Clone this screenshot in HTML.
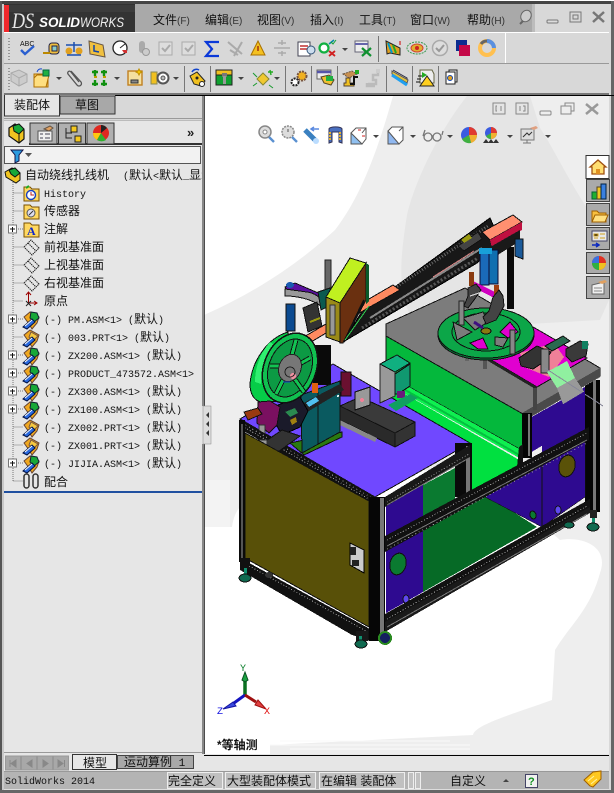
<!DOCTYPE html>
<html><head><meta charset="utf-8"><style>
html,body{margin:0;padding:0;background:#fff;width:614px;height:793px;overflow:hidden}
svg{display:block}
.c{font-family:"Liberation Sans","WenQuanYi Zen Hei","Noto Sans CJK SC",sans-serif;font-size:12px;fill:#111}
.m{font-family:"Liberation Mono","WenQuanYi Zen Hei","Noto Sans CJK SC",monospace;font-size:10px;fill:#111}
.t{font-family:"Liberation Sans","WenQuanYi Zen Hei","Noto Sans CJK SC",sans-serif;font-size:12px;fill:#111}
.s{font-family:"Liberation Sans",sans-serif;font-size:10px;fill:#333}
.dd{fill:#444}
.dot{stroke:#777;stroke-dasharray:1 1;stroke-width:1;fill:none}
</style></head><body>
<svg width="614" height="793" viewBox="0 0 614 793" xmlns="http://www.w3.org/2000/svg">
<rect width="614" height="793" fill="#d8d8d8"/>
<rect width="614" height="1" y="0" fill="#fff"/>
<rect x="0" y="1" width="614" height="3" fill="#444"/>
<rect x="0" y="1" width="2" height="792" fill="#555"/>
<rect x="611" y="1" width="3" height="792" fill="#666"/>
<rect x="0" y="790" width="614" height="3" fill="#666"/>
<rect x="2" y="4" width="2" height="786" fill="#c8c8c8"/>
<rect x="609" y="4" width="2" height="786" fill="#d8d8d8"/>

<!-- title bar -->
<rect x="4" y="4" width="605" height="28" fill="#d8d8d8"/>
<rect x="135" y="4" width="397" height="28" fill="#a9a9a9"/>
<rect x="532" y="4" width="3" height="28" fill="#bcbcbc"/>
<rect x="4" y="4" width="131" height="28" fill="#333"/>
<rect x="9" y="5" width="126" height="7" fill="#3c3c3c"/>
<rect x="4" y="5" width="5" height="27" fill="#f0282c"/>
<text x="12" y="28" font-family="Liberation Serif,serif" font-style="italic" font-size="22" fill="#e8e8e8" textLength="22" lengthAdjust="spacingAndGlyphs">DS</text>
<text x="39" y="27" font-family="Liberation Sans,sans-serif" font-style="italic" font-weight="bold" font-size="14" fill="#fff" textLength="41" lengthAdjust="spacingAndGlyphs">SOLID</text>
<text x="80" y="27" font-family="Liberation Sans,sans-serif" font-style="italic" font-size="14" fill="#eee" textLength="44" lengthAdjust="spacingAndGlyphs">WORKS</text>
<g>
<text x="153" y="24" class="c">文件<tspan class="s">(F)</tspan></text>
<text x="205" y="24" class="c">编辑<tspan class="s">(E)</tspan></text>
<text x="257" y="24" class="c">视图<tspan class="s">(V)</tspan></text>
<text x="310" y="24" class="c">插入<tspan class="s">(I)</tspan></text>
<text x="359" y="24" class="c">工具<tspan class="s">(T)</tspan></text>
<text x="410" y="24" class="c">窗口<tspan class="s">(W)</tspan></text>
<text x="467" y="24" class="c">帮助<tspan class="s">(H)</tspan></text>
</g>
<g><ellipse cx="526" cy="16" rx="5" ry="6" fill="#ccc" stroke="#666" transform="rotate(30 526 16)"/><path d="M523 21l-3 3" stroke="#666" stroke-width="2"/></g>
<rect x="547" y="20" width="11" height="3" rx="1" fill="#ddd" stroke="#777"/>
<rect x="570" y="12" width="11" height="10" fill="none" stroke="#777"/><rect x="573" y="15" width="5" height="4" fill="none" stroke="#777"/>
<path d="M593 12l11 10M604 12l-11 10" stroke="#777" stroke-width="2.500" fill="none"/>

<!-- toolbars -->
<rect x="4" y="32" width="605" height="1" fill="#fff"/>
<rect x="4" y="63" width="605" height="1" fill="#999"/>
<rect x="505" y="33" width="1" height="30" fill="#fff"/>
<path d="M9 38v22" stroke="#555" stroke-dasharray="1 2"/>
<path d="M9 68v22" stroke="#555" stroke-dasharray="1 2"/>
<!-- row 1 -->
<text x="20" y="46" font-family="Liberation Sans,sans-serif" font-size="7" fill="#111">ABC</text>
<path d="M21 50l4 4 9-8" stroke="#2a5fd0" stroke-width="2.400" fill="none"/>
<rect x="49" y="43" width="10" height="11" rx="3" fill="#f0c040" stroke="#224"/><rect x="52" y="46" width="5" height="5" fill="#8cc" stroke="#224"/><path d="M43 53h7" stroke="#b80" stroke-width="2"/>
<path d="M74 42v10M66 45h16" stroke="#1a4fb0" stroke-width="1.500"/><circle cx="69" cy="51" r="3.500" fill="#e0a020"/><circle cx="79" cy="51" r="3.500" fill="#e0a020"/><path d="M67 55h14" stroke="#1a4fb0" stroke-width="1.500"/>
<path d="M89 41l14 4 2 12-15-3z" fill="#f0c040" stroke="#654"/><path d="M94 45v6l5 1" stroke="#14a" stroke-width="1.500" fill="none"/>
<circle cx="120" cy="48" r="7" fill="#fff" stroke="#222" stroke-width="1.300"/><path d="M120 48l5-4" stroke="#222"/><path d="M122 50h5v3h-3z" fill="#d03030"/>
<rect x="139" y="41" width="6" height="12" rx="3" fill="#aaa"/><circle cx="146" cy="52" r="3.500" fill="#ccc" stroke="#999"/>
<rect x="159" y="42" width="13" height="13" fill="#ddd" stroke="#aaa"/><path d="M162 48l3 3 5-6" stroke="#aaa" stroke-width="2" fill="none"/>
<rect x="182" y="42" width="13" height="13" fill="#ddd" stroke="#aaa"/><path d="M185 48l3 3 5-6" stroke="#aaa" stroke-width="2" fill="none"/>
<path d="M219 42h-13l6 7-6 7h13" stroke="#0a38d8" stroke-width="2.200" fill="none"/>
<path d="M228 42l14 12M242 42l-8 14M230 50l8 5" stroke="#aaa" stroke-width="2" fill="none"/>
<path d="M258 41l7 14h-14z" fill="#f4c020" stroke="#a87000"/><path d="M258 46v5" stroke="#a03010" stroke-width="1.500"/>
<path d="M274 48h16M278 43h8M278 53h8M282 40v5M282 51v5" stroke="#aaa" stroke-width="1.500"/>
<rect x="298" y="42" width="12" height="14" fill="#fff" stroke="#445"/><path d="M300 46h8M300 49h8" stroke="#c03030" stroke-width="1.500"/><circle cx="311" cy="50" r="4" fill="#cde" stroke="#357"/>
<circle cx="324" cy="48" r="4.500" fill="#fff" stroke="#10b040" stroke-width="2.200"/><path d="M329 44l5-4" stroke="#08a" stroke-width="1.500"/><path d="M329 51l6 5M335 51l-6 5" stroke="#d02020" stroke-width="1.800"/><path d="M331 42l2 2 3-4" stroke="#10a030" fill="none"/>
<path class="dd" d="M342 48h6l-3 3z"/>
<rect x="355" y="41" width="13" height="11" fill="#eee" stroke="#667"/><path d="M355 44h13" stroke="#66a" stroke-width="2"/><path d="M362 48l9 8M371 48l-9 8" stroke="#109030" stroke-width="2.200"/>
<rect x="378" y="36" width="1" height="26" fill="#777"/>
<path d="M386 41l14 7v7l-10-2-3 1z" fill="#e0a020" stroke="#222"/><path d="M388 43l4 10" stroke="#09c" stroke-width="2"/><path d="M393 45l3 8" stroke="#2a2" stroke-width="2"/><path d="M400 41v4" stroke="#c00"/>
<ellipse cx="417" cy="48" rx="10" ry="6" fill="none" stroke="#3a9a50" stroke-dasharray="2 1"/><ellipse cx="417" cy="48" rx="6" ry="4" fill="#e0b030" stroke="#d04030"/><circle cx="417" cy="48" r="2" fill="#c22"/>
<circle cx="440" cy="48" r="7.500" fill="#ddd" stroke="#aaa" stroke-width="1.500"/><path d="M436 48l3 3 5-6" stroke="#999" stroke-width="2" fill="none"/>
<rect x="456" y="40" width="11" height="11" fill="#0c2c90"/><rect x="459" y="45" width="11" height="11" fill="#c40848"/>
<circle cx="487" cy="48" r="7" fill="none" stroke="#ffc050" stroke-width="4"/><path d="M487 41a7 7 0 0 1 7 7" stroke="#5a90e0" stroke-width="4" fill="none"/><path d="M481 44a7 7 0 0 1 6-3" stroke="#666" stroke-width="3" fill="none"/>
<!-- row 2 -->
<path d="M11 73l8-3 8 4v8l-8 4-8-5z" fill="#ccc" stroke="#aaa"/><path d="M19 78l8-4M19 78l-8-5M19 78v8" stroke="#aaa"/>
<path d="M34 74h14v13h-14z" fill="#f4c860" stroke="#b07000"/><path d="M34 78l3-3h12l-3 12h-12z" fill="#ffdf80" stroke="#b07000"/><rect x="43" y="70" width="6" height="6" fill="#20b040" stroke="#064"/><path d="M37 72a4 4 0 0 1 5-3" stroke="#14c" fill="none"/>
<path class="dd" d="M56 77h6l-3 3z"/>
<path d="M71 71l10 11a2.500 2.500 0 0 1-4 3l-9-11a1.500 1.500 0 0 1 3-2l8 10" stroke="#555" stroke-width="1.300" fill="none"/>
<path d="M95 70v6M95 80v6M104 70v6M104 80v6M92 72h6M92 84h6M101 72h6M101 84h6" stroke="#109010" stroke-width="2.400"/><path d="M94 77h3M103 77h3" stroke="#c0a000" stroke-width="2"/>
<path class="dd" d="M114 77h6l-3 3z"/>
<rect x="128" y="71" width="14" height="14" fill="#f4e0a0" stroke="#c08020" stroke-width="1.400"/><path d="M131 80h7v3h-7z" fill="#888" stroke="#333"/><path d="M139 69l1 2 2 1-2 1-1 2-1-2-2-1 2-1z" fill="#ffd000" stroke="#c09000"/>
<rect x="151" y="72" width="6" height="12" fill="#f0c020" stroke="#885"/><circle cx="163" cy="78" r="5.500" fill="#fff" stroke="#555" stroke-width="2"/><circle cx="163" cy="78" r="2" fill="#bbb" stroke="#555"/>
<path class="dd" d="M173 77h6l-3 3z"/>
<rect x="184" y="66" width="1" height="26" fill="#777"/>
<path d="M190 76l7-4 8 9-4 5-7-2z" fill="#f0c020" stroke="#222"/><circle cx="202" cy="84" r="2.500" fill="#fff" stroke="#222"/><path d="M192 72a5 5 0 0 1 7-2" stroke="#14c" stroke-width="1.500" fill="none"/><circle cx="197" cy="78" r="1.500" fill="#222"/>
<rect x="210" y="66" width="1" height="26" fill="#777"/>
<rect x="216" y="70" width="16" height="15" fill="#10a030" stroke="#222"/><rect x="216" y="70" width="16" height="5" fill="#f0c020" stroke="#222"/><rect x="222" y="73" width="5" height="4" fill="#777"/><rect x="223" y="76" width="3" height="8" fill="#999"/>
<path class="dd" d="M238 77h6l-3 3z"/>
<path d="M263 73l6 6-6 6-6-6z" fill="#f0c830" stroke="#883"/><path d="M253 73l4 4M269 85l4 3M253 86l4-3" stroke="#1a9a30"/><path d="M270 70l1 5M268 72h5" stroke="#2a2" stroke-width="1.400"/>
<path class="dd" d="M274 77h6l-3 3z"/>
<rect x="285" y="66" width="1" height="26" fill="#777"/>
<circle cx="302" cy="76" r="4.500" fill="#f0b020" stroke="#754" stroke-dasharray="2 1" stroke-width="2"/><circle cx="295" cy="82" r="3.500" fill="#fff" stroke="#222" stroke-width="2" stroke-dasharray="2 1"/>
<rect x="311" y="66" width="1" height="26" fill="#777"/>
<rect x="317" y="70" width="14" height="9" fill="#eee" stroke="#666"/><path d="M317 72h14" stroke="#55a" stroke-width="2.500"/><path d="M321 77l8-2 5 5-3 5-7-2z" fill="#f0c030" stroke="#542"/><rect x="326" y="76" width="7" height="5" fill="#20b040"/>
<rect x="337" y="66" width="1" height="26" fill="#777"/>
<path d="M343 74l9-3 5 3-8 4z" fill="#c89050" stroke="#654" stroke-dasharray="2 1"/><path d="M346 78h4v5h4v3h-10v-3h2z" fill="#f0c020" stroke="#543"/><path d="M350 84h4v-7h4" stroke="#111" stroke-width="2" fill="none"/><rect x="355" y="70" width="4" height="4" fill="#2a2"/>
<path d="M368 84h8v-4h-3v-5h5v-3M367 83v3h8" stroke="#bbb" stroke-width="2.500" fill="none"/><rect x="376" y="69" width="4" height="4" fill="#ccc"/>
<rect x="386" y="66" width="1" height="26" fill="#777"/>
<path d="M393 70l14 8v6" fill="none" stroke="#2a2a40" stroke-width="1"/><path d="M392 71l16 9-1 3-15-9z" fill="#e0c040" stroke="#555"/><path d="M392 75l15 10" stroke="#20a0f0" stroke-width="3"/>
<rect x="412" y="66" width="1" height="26" fill="#777"/>
<path d="M420 70h12l2 4v9h-14z" fill="#eee" stroke="#664"/><path d="M427 76l7 10h-14z" fill="#ffd020" stroke="#222"/><path d="M418 76h5M417 79h4M416 82h4" stroke="#111"/><path d="M422 72l5 3-5 3z" fill="#2a2" />
<rect x="438" y="66" width="1" height="26" fill="#777"/>
<rect x="449" y="70" width="8" height="12" fill="#eee" stroke="#222"/><rect x="446" y="72" width="9" height="12" fill="#fff" stroke="#222"/><circle cx="450" cy="78" r="2.500" fill="#e0a020" stroke="#14a"/>
<rect x="4" y="93" width="605" height="2" fill="#777"/>

<!-- left pane -->
<rect x="4" y="95" width="199" height="659" fill="#e6e6e6"/>
<rect x="4" y="95" width="199" height="25" fill="#d8d8d8"/>
<rect x="115" y="95" width="499" height="1" fill="#000"/>
<rect x="60" y="96" width="55" height="18" fill="#a8a8a8" stroke="#333"/>
<path d="M4.500 95v21h55V95" fill="#e6e6e6" stroke="#333"/>
<text x="14" y="109" class="c" fill="#123">装配体</text>
<text x="75" y="109" class="c">草图</text>
<rect x="4" y="118" width="198" height="1" fill="#999"/>
<rect x="4" y="120" width="198" height="1" fill="#bbb"/>
<rect x="4" y="122" width="198" height="22" fill="#e6e6e6"/>
<rect x="4" y="143" width="198" height="2" fill="#333"/>
<path d="M30 144v-21h27v21zM58.500 144v-21h27v21zM87 144v-21h27v21z" fill="#b0b0b0" stroke="#333"/>
<rect x="4" y="122" width="25" height="23" fill="#e6e6e6"/>
<g><path d="M9 128l6-4 9 6v9l-5 4-10-7z" fill="#f0c420" stroke="#111" stroke-width="1.200"/><path d="M13 126l6-2 5 5-5 5-5-3z" fill="#18a838" stroke="#111"/><path d="M19 134v9" stroke="#111"/></g>
<rect x="38" y="131" width="14" height="10" fill="#f0f0f0" stroke="#555"/><path d="M44 129l6-3 3 2-4 3z" fill="#e0a060" stroke="#654"/><path d="M40 134h3M45 134h5M40 138h3M45 138h5" stroke="#445"/>
<path d="M66 128v10h6M66 133h6" stroke="#222" fill="none"/><rect x="71" y="126" width="6" height="6" fill="#f4c820" stroke="#222"/><rect x="75" y="136" width="6" height="6" fill="#f4c820" stroke="#222"/>
<circle cx="101" cy="133" r="8" fill="#e02820"/><path d="M101 133l-8 0a8 8 0 0 0 4 7z" fill="#ffc810"/><path d="M101 133l-4 7a8 8 0 0 0 9 0z" fill="#30b030"/><path d="M101 125a8 8 0 0 1 6 3l-6 5z" fill="#222"/>
<text x="187" y="137" font-family="Liberation Sans,sans-serif" font-size="13" font-weight="bold" fill="#222">»</text>
<rect x="4.500" y="146.500" width="196" height="17" fill="#f2f2f2" stroke="#555"/>
<path d="M11 150h12l-4 5v6l-4 2v-8z" fill="#2a9adf" stroke="#114"/>
<path d="M25 153h7l-3.500 4z" fill="#555"/>
<path class="dot" d="M13 180v301M13.500 193h10M13.500 211h10M18 229h6M13.500 247h10M13.500 265h10M13.500 283h10M13.500 301h10M18 319h6M13.500 337h10M18 355h6M18 373h6M18 391h6M18 409h6M13.500 427h10M13.500 445h10M18 463h6M13.500 481h10" stroke="#777"/>
<g fill="#fff" stroke="#777"><rect x="8.500" y="225" width="8" height="8"/><rect x="8.500" y="315" width="8" height="8"/><rect x="8.500" y="351" width="8" height="8"/><rect x="8.500" y="369" width="8" height="8"/><rect x="8.500" y="387" width="8" height="8"/><rect x="8.500" y="405" width="8" height="8"/><rect x="8.500" y="459" width="8" height="8"/></g>
<path d="M10 229h5M12.500 227v5M10 319h5M12.500 317v5M10 355h5M12.500 353v5M10 373h5M12.500 371v5M10 391h5M12.500 389v5M10 409h5M12.500 407v5M10 463h5M12.500 461v5" stroke="#111"/>
<path d="M5 172l7-4 8 5v7l-4 3-10-6z" fill="#f0c420" stroke="#111"/><path d="M9 170l6-2 5 5-5 4-4-3z" fill="#18a838" stroke="#111"/>
<text x="25" y="179" class="t">自动绕线扎线机</text>
<text x="123" y="179" class="m">(<tspan class="t">默认</tspan>&lt;<tspan class="t">默认</tspan>_<tspan class="t">显示</tspan></text>
<g stroke="#7a5000"><path d="M24 187h6l2 2h7v12h-15z" fill="#ffd860"/><path d="M24 205h6l2 2h7v12h-15z" fill="#ffd860"/><path d="M24 223h6l2 2h7v12h-15z" fill="#ffd860"/></g>
<circle cx="31" cy="195" r="4.500" fill="#fff" stroke="#1a40c0" stroke-width="1.400"/><path d="M31 192v3h3" stroke="#c02020" fill="none"/><path d="M26 188l3-2" stroke="#2a2" stroke-width="2"/>
<circle cx="31" cy="213" r="4" fill="#dde" stroke="#555"/><path d="M29 215l4-4" stroke="#333"/>
<text x="27" y="235" font-family="Liberation Serif,serif" font-size="12" font-weight="bold" fill="#1028c8">A</text>
<text x="44" y="197" class="m">History</text>
<text x="44" y="215" class="t">传感器</text>
<text x="44" y="233" class="t">注解</text>
<g fill="none" stroke="#222" stroke-dasharray="1.500 .7"><path d="M24 247l7-7 8 8-7 7zM28 243l8 8"/><path d="M24 265l7-7 8 8-7 7zM28 261l8 8"/><path d="M24 283l7-7 8 8-7 7zM28 279l8 8"/></g>
<text x="44" y="251" class="t">前视基准面</text>
<text x="44" y="269" class="t">上视基准面</text>
<text x="44" y="287" class="t">右视基准面</text>
<path d="M28.500 293v10h8M26 295l2.500-3 2.500 3M34 301l3 2-3 2" stroke="#900" fill="none"/><path d="M26 301l5 5M31 301l-5 5" stroke="#222"/>
<text x="44" y="305" class="t">原点</text>
<defs><g id="cp"><path d="M1 6l6-5 9 5-2 6-5 6-3-5z" fill="#f0a820" stroke="#643"/><path d="M8 1l6 1 2 5-5 4-4-4z" fill="#18a838" stroke="#123"/><path d="M0 16l9-8 3 3-8 7z" fill="#2a6ae0" stroke="#014"/><path d="M2 15l7-6" stroke="#fff"/></g>
<g id="cq"><path d="M1 6l6-5 9 5-2 6-5 6-3-5z" fill="#f0a820" stroke="#643"/><path d="M8 3l7 4-4 4-5-3z" fill="#f6c840" stroke="#754"/><path d="M0 16l9-8 3 3-8 7z" fill="#2a6ae0" stroke="#014"/><path d="M2 15l7-6" stroke="#fff"/></g></defs>
<use href="#cp" x="23" y="311"/><use href="#cq" x="23" y="329"/><use href="#cp" x="23" y="347"/><use href="#cp" x="23" y="365"/><use href="#cp" x="23" y="383"/><use href="#cp" x="23" y="401"/><use href="#cq" x="23" y="419"/><use href="#cq" x="23" y="437"/><use href="#cp" x="23" y="455"/>
<text x="44" y="323" class="m">(-) PM.ASM&lt;1&gt; (<tspan class="t">默认</tspan>)</text>
<text x="44" y="341" class="m">(-) 003.PRT&lt;1&gt; (<tspan class="t">默认</tspan>)</text>
<text x="44" y="359" class="m">(-) ZX200.ASM&lt;1&gt; (<tspan class="t">默认</tspan>)</text>
<text x="44" y="377" class="m">(-) PRODUCT_473572.ASM&lt;1&gt;</text>
<text x="44" y="395" class="m">(-) ZX300.ASM&lt;1&gt; (<tspan class="t">默认</tspan>)</text>
<text x="44" y="413" class="m">(-) ZX100.ASM&lt;1&gt; (<tspan class="t">默认</tspan>)</text>
<text x="44" y="431" class="m">(-) ZX002.PRT&lt;1&gt; (<tspan class="t">默认</tspan>)</text>
<text x="44" y="449" class="m">(-) ZX001.PRT&lt;1&gt; (<tspan class="t">默认</tspan>)</text>
<text x="44" y="467" class="m">(-) JIJIA.ASM&lt;1&gt; (<tspan class="t">默认</tspan>)</text>
<g fill="none" stroke="#333"><rect x="24" y="474" width="5" height="14" rx="2.500" stroke-width="1.500"/><rect x="33" y="474" width="5" height="14" rx="2.500" stroke-width="1.500"/></g>
<text x="44" y="486" class="t">配合</text>
<rect x="4" y="491" width="198" height="2" fill="#2050a0"/>
<rect x="4" y="752" width="199" height="1" fill="#999"/>

<!-- viewport -->
<rect x="204" y="96" width="405" height="659" fill="#fff"/>
<path d="M393 96C375 160 358 200 335 230C300 262 260 290 204 315V527H232C236 500 250 470 480 470L560 540C580 536 610 545 600 573C590 610 570 625 555 650L552 700C510 715 475 725 473 735L270 745V755H609V96Z" fill="#eeeeee"/>
<path d="M467 96C440 130 415 180 407 215C400 260 395 300 420 330L600 320L609 300V240C575 195 555 150 540 128L530 96Z" fill="#e5e5e5"/>
<rect x="204" y="480" width="26" height="47" fill="#f3f3f3"/>
<path d="M280 741h170M270 745h200M290 749h180" stroke="#fafafa"/>
<rect x="204" y="96" width="1" height="659" fill="#000" fill-opacity=".7"/>
<g fill="none" stroke="#888"><rect x="493" y="103" width="12" height="11"/><path d="M497 106h-1v5h1M501 106v5" /><rect x="516" y="103" width="12" height="11"/><path d="M520 106v5M523 106h2v5h-2"/><rect x="540" y="111" width="11" height="4" rx="1"/><rect x="561" y="106" width="10" height="8"/><path d="M565 106v-3h9v8h-3"/></g>
<path d="M586 104l12 10M598 104l-12 10" stroke="#999" stroke-width="2.500" fill="none"/>
<circle cx="265" cy="132" r="6" fill="#ddd" stroke="#888" stroke-width="1.500"/><circle cx="265" cy="132" r="2" fill="#fff" stroke="#888"/><path d="M269 137l5 5" stroke="#5a90d0" stroke-width="2.400"/>
<circle cx="288" cy="132" r="6" fill="#ddd" stroke="#888" stroke-dasharray="2 1" stroke-width="1.500"/><path d="M288 129v3" stroke="#555"/><path d="M292 137l5 5" stroke="#5a90d0" stroke-width="2.400"/>
<path d="M305 130l10 10" stroke="#3a80c0" stroke-width="5"/><circle cx="316" cy="141" r="3" fill="#bdf"/><path d="M319 129h-7M314 127l-3 2 3 2" stroke="#5a8ae0" stroke-width="1.500" fill="none"/>
<path d="M329 129a6 2 0 0 1 13 0v14l-3-1v-10h-7v10l-3 1z" fill="#4a70c0" stroke="#335"/><path d="M330 132v9M340 132v9" stroke="#e0b030" stroke-width="2" stroke-dasharray="2 1"/>
<rect x="351" y="133" width="11" height="11" fill="#90c0f0" stroke="#555"/><path d="M351 133l5-5h10v11l-4 5zM362 133l4-5" fill="#fff" stroke="#555"/><path d="M358 130h3M362 136h3" stroke="#d02020"/>
<path class="dd" d="M373 135h6l-3 3z"/>
<rect x="388" y="131" width="11" height="13" fill="#90b8f0" stroke="#555"/><path d="M388 131l4-4h11v13l-4 4zM399 131l4-4" fill="#fff" stroke="#555"/>
<path class="dd" d="M410 135h6l-3 3z"/>
<g fill="none" stroke="#777" stroke-width="1.300"><ellipse cx="428" cy="137" rx="4" ry="4"/><ellipse cx="437" cy="137" rx="4" ry="4"/><path d="M423 136l2-6M442 135l1-4"/></g>
<path class="dd" d="M447 135h6l-3 3z"/>
<circle cx="469" cy="135" r="8" fill="#3a5ce0"/><path d="M469 135h8a8 8 0 0 0-8-8z" fill="#e03a30"/><path d="M469 135l8 0a8 8 0 0 1-6 8z" fill="#f0b030"/><path d="M469 135l2 8a8 8 0 0 1-9-4z" fill="#40b040"/>
<circle cx="491" cy="133" r="6" fill="#3a5ce0"/><path d="M491 133h6a6 6 0 0 0-6-6z" fill="#e03a30"/><path d="M491 133l6 0a6 6 0 0 1-6 6z" fill="#f0b030"/><path d="M491 133v6a6 6 0 0 1-5-3z" fill="#40b040"/><path d="M483 143l3-4 3 4zM488 143l3-4 3 4zM493 143l3-4 3 4z" fill="#333"/>
<path class="dd" d="M507 135h6l-3 3z"/>
<rect x="521" y="129" width="13" height="11" fill="#ddd" stroke="#777"/><path d="M523 137l4-4 2 2 3-3" stroke="#333" fill="none"/><path d="M527 140v3M523 143h8" stroke="#777"/><path d="M530 128l6-2 2 2-4 2z" fill="#e0a080"/>
<path class="dd" d="M545 135h6l-3 3z"/>

<!-- task pane tabs -->
<path d="M609 155.500h-23v23h23z" fill="#fff" stroke="#333"/>
<g fill="#aaa" stroke="#444"><rect x="586.500" y="179.500" width="23" height="22"/><rect x="586.500" y="203.500" width="23" height="22"/><rect x="586.500" y="227.500" width="23" height="22"/><rect x="586.500" y="252.500" width="23" height="21"/><rect x="586.500" y="276.500" width="23" height="22"/></g>
<path d="M590 167l8-7 8 7h-2v7h-12v-7z" fill="#ffdd70" stroke="#a05010" stroke-width="1.300"/><rect x="596" y="169" width="4" height="5" fill="#e09020"/>
<rect x="592" y="192" width="5" height="7" fill="#20b030" stroke="#063"/><rect x="597" y="187" width="4" height="12" fill="#f0c820" stroke="#542"/><rect x="601" y="184" width="5" height="15" fill="#3a80e0" stroke="#024"/>
<path d="M592 211h5l2 2h7v9h-14z" fill="#f8c040" stroke="#a06000"/><path d="M592 222l3-7h13l-3 7z" fill="#ffe080" stroke="#a06000"/>
<rect x="592" y="231" width="15" height="10" fill="#e8e8e8" stroke="#446"/><path d="M594 234h4v2h-4zM600 234h5M600 238h5M594 238h4" stroke="#d0a020"/><path d="M592 245h6M596 243l3 2-3 2" stroke="#0a28c0" stroke-width="1.500" fill="none"/>
<circle cx="599" cy="263" r="7" fill="#e03020"/><path d="M599 263h-7a7 7 0 0 1 7-7z" fill="#3a70e0"/><path d="M599 263h7a7 7 0 0 1-7 7z" fill="#f0c020"/><path d="M599 263v7a7 7 0 0 1-7-7z" fill="#30b040"/>
<path d="M592 285l12-3v12h-12z" fill="#f0f0f0" stroke="#666"/><path d="M598 282l7-2 2 2-5 2z" fill="#e0a060"/><path d="M594 288h8M594 291h8" stroke="#888"/>

<!-- MODEL -->
<g shape-rendering="crispEdges">
<path d="M585 380h15v132h-15z" fill="#050505"/><path d="M593 380h3v130h-3z" fill="#777"/>
<path d="M530 418l55-31v33l-55 33z" fill="#2e0a90"/>
<!-- gray top -->
<path d="M386 324l79-36 135 80v8l-76 42v2L386 337z" fill="#7c7c7c" stroke="#111"/>
<path d="M522 413l78-45v9l-78 45z" fill="#4a4a4a"/>
<path d="M524 421l76-44" class="dot" stroke="#ccc"/>
<!-- green front -->
<path d="M386 336l137 78v37L386 374z" fill="#04b83c" stroke="#111"/>
<path d="M386 374l135 76v9L386 383z" fill="#0ef050"/>
<path d="M386 379l135 77" stroke="#05c040" stroke-width="2"/>
<path d="M386 383l135 78-4 6-32 22-20 6-3-50-86-47z" fill="#00e040"/>
<path d="M522 413h10v45h-10z" fill="#050505"/><rect x="528" y="414" width="2" height="42" fill="#777"/>
<path d="M519 447l4-3v20l-6 3z" fill="#111"/>
<!-- gantry -->
<rect x="507" y="247" width="7" height="62" fill="#0a0a0a"/>
<path d="M363 310l127-92 10 22-23 23-134 79z" fill="#181818" stroke="#000"/>
<path d="M372 303l116-77" stroke="#666" stroke-width="3" stroke-dasharray="1 2"/>
<path d="M370 318l112-70" stroke="#888" stroke-width="2"/>
<path d="M362 328l116-70" stroke="#555" stroke-width="3" stroke-dasharray="2 2"/>
<path d="M433 277l41-26" stroke="#d08080"/>
<path d="M302 338l91-53 7 5-32 18-62 37z" fill="#ff8a60" stroke="#111"/>
<path d="M482 232l31-17 9 7-32 18z" fill="#ff9070" stroke="#111"/>
<path d="M490 240l32-18v8l-30 18z" fill="#c01040"/>
<path d="M458 246l20-14 4 7-18 12z" fill="#444" stroke="#111"/>
<path d="M461 240l8-6 3 4-8 5z" fill="#9a9a10"/>
<path d="M478 254l42-24v11l-40 25z" fill="#1a1a1a"/>
<rect x="480" y="253" width="9" height="32" fill="#1a6ab8" stroke="#0a0a30"/><rect x="489" y="250" width="9" height="34" fill="#106fb0" stroke="#0a0a30"/>
<rect x="479" y="248" width="13" height="6" fill="#18a0d8"/>
<path d="M515 239h8v20l-8-3z" fill="#1a5a9a" stroke="#111"/>
<path d="M471 280l28 14-1 6-27-14z" fill="#d000c0"/>
<rect x="494" y="285" width="5" height="16" fill="#a04010"/><rect x="469" y="272" width="5" height="14" fill="#8a3a10"/>
<!-- magenta plate -->
<path d="M533 327l54 31-50 29-49-29z" fill="#e000d0" stroke="#111"/>
<path d="M488 358l49 29v3l-49-29z" fill="#222"/>
<!-- round table -->
<rect x="465" y="353" width="4" height="8" fill="#666"/><rect x="483" y="358" width="4" height="11" fill="#555"/>
<ellipse cx="486" cy="335" rx="48" ry="25" fill="#087a38" stroke="#111"/>
<ellipse cx="486" cy="333" rx="48" ry="25" fill="#0ca648" stroke="#111"/>
<ellipse cx="486" cy="332" rx="34" ry="19" fill="#0ca648" stroke="#111"/>
<path d="M453 322l19 10-15 8z" fill="#7c7c7c" stroke="#111"/>
<path d="M463 318l20-6 5 10-13 8z" fill="#7c7c7c" stroke="#111"/>
<path d="M470 343l13-5 5 11h-10z" fill="#e000d0" stroke="#111"/>
<path d="M495 337l13 1-5 9-8-2z" fill="#7c7c7c" stroke="#111"/>
<path d="M510 322l8 10-10 6-8-6z" fill="#e000d0" stroke="#111"/>
<ellipse cx="486" cy="331" rx="5" ry="3" fill="#8a7a10" stroke="#111"/>
<path d="M474 322l9 6" stroke="#401080" stroke-width="3"/>
<rect x="459" y="301" width="5" height="24" fill="#888" stroke="#222"/><rect x="510" y="330" width="5" height="24" fill="#888" stroke="#222"/>
<!-- grippers -->
<path d="M468 288l8-4 5 6-7 10-6 8-4-2 4-10z" fill="#444" stroke="#111"/>
<path d="M499 290l4 6 1 10-5 9-3 5-10 4-3-7 6-6 4-14z" fill="#444" stroke="#111"/>
<path d="M470 296l12-4" stroke="#ddd"/>
<!-- mech on plate -->
<path d="M520 353l34-10 10 14-15 20-25-10z" fill="#f08098"/>
<path d="M519 358l18-12 14 6-6 9-12 8-12-3z" fill="#333" stroke="#111"/>
<rect x="541" y="349" width="8" height="24" fill="#888" stroke="#222"/>
<path d="M545 346l18-10 7 5-18 10z" fill="#2a6a50" stroke="#111"/>
<path d="M566 349l14-8 8 3-2 12-14 6-6-6z" fill="#3a3a3a" stroke="#111"/>
<rect x="582" y="341" width="6" height="8" fill="#108060"/>
<path d="M547 372l20-11 8 17-18 10z" fill="#90f0a0"/>
<path d="M557 388l18-10 10 15-1 12-18 13-3-14z" fill="#999"/>
<rect x="533" y="388" width="4" height="22" fill="#444"/>
<path d="M545 368l58 38" stroke="#889" stroke-width="1"/>
<!-- purple top -->
<path d="M240 419l93-55 137 79-95 54z" fill="#7048ff" stroke="#111"/>
<path d="M380 364h15v32l-15 7z" fill="#999" stroke="#222"/>
<path d="M395 374l15-10v22l-12 8h-3z" fill="#109870" stroke="#111"/>
<path d="M380 364l17-9 13 8-15 9z" fill="#10b080" stroke="#111"/>
<rect x="397" y="391" width="8" height="7" fill="#6a1a7a"/>
<path d="M388 405l22-11 8 4-22 13z" fill="#10a060"/>
<path d="M340 406l20-9 55 25-20 11z" fill="#3a3a3a" stroke="#111"/>
<path d="M395 433l20-11v14l-20 11z" fill="#333" stroke="#111"/>
<path d="M340 406l55 27v14l-55-27z" fill="#2a2a2a" stroke="#111"/>
<path d="M340 420l37 18-2 4-35-17z" fill="#888"/>
<path d="M355 392l15-5v18l-15 5z" fill="#999" stroke="#111"/><circle cx="362" cy="400" r="2" fill="#f08098"/>
<!-- yellow box and pillar -->
<rect x="313" y="345" width="18" height="40" fill="#0a0a0a"/>
<rect x="325" y="260" width="6" height="38" fill="#666" stroke="#222"/>
<path d="M285 287l10-4 28 12-1 8-33-10z" fill="#5a10a0" stroke="#111"/>
<path d="M285 289l22 3c8 1 14 6 18 12l-2 4c-6-6-20-12-38-12z" fill="#999" stroke="#111"/>
<rect x="286" y="304" width="9" height="27" fill="#0b4a90" stroke="#111"/>
<ellipse cx="290" cy="285" rx="4" ry="3" fill="#1a5ab0"/>
<path d="M318 292l12-4 3 16-12 6z" fill="#0a5a50" stroke="#111"/>
<path d="M303 308l14-6 5 24-14 6z" fill="#333" stroke="#111"/><path d="M310 322l10-4" stroke="#9a9a10" stroke-width="2"/>
<path d="M326 297l24-39 16 5-26 40z" fill="#c0f020" stroke="#111"/>
<path d="M326 297l14 6v39l-14-5z" fill="#9a8a18" stroke="#111"/>
<path d="M340 303l26-40v37l-23 43h-3z" fill="#6a3010" stroke="#111"/>
<path d="M366 263l3 2v36l-3 3z" fill="#0a5a2a"/>
<rect x="330" y="305" width="5" height="30" fill="#999" stroke="#333"/>
<path d="M344 342l20-42" stroke="#111" stroke-width="2"/>
<path d="M345 340l24-34" stroke="#30d050"/>
<!-- teal machine -->
<path d="M290 443l52-11v5l-38 18z" fill="#2a7a10" stroke="#111"/>
<path d="M301 395l39-14v51l-38 21z" fill="#0a5a60" stroke="#111"/><path d="M318 392v52" stroke="#111"/>
<rect x="341" y="372" width="10" height="24" fill="#6a1030" stroke="#111"/>
<path d="M290 410l50-26 4 6-50 30z" fill="#222"/>
<path d="M306 403l10-6 3 4-10 6z" fill="#50c0f0"/><circle cx="338" cy="396" r="1" fill="#fff"/>
<rect x="312" y="383" width="6" height="10" fill="#e06010"/>
<path d="M278 405l22-8 8 14-8 16-18 8-8-14z" fill="#1a1a2a" stroke="#000"/>
<path d="M285 412l10-4 3 5-8 4z" fill="#2a8a50"/><path d="M290 420l6-3 1 5-5 3z" fill="#a08010"/>
<!-- reel -->
<path d="M288 332c-20 6-36 28-38 52c0 14 8 20 18 18l22-2z" fill="#06cc48" stroke="#111"/>
<path d="M270 342c-9 10-15 24-15 40l6 2c0-16 6-30 15-38z" fill="#30f070"/>
<ellipse cx="290" cy="368" rx="26" ry="36" transform="rotate(22 290 368)" fill="#10c050" stroke="#111" stroke-width="1.500"/>
<ellipse cx="290" cy="368" rx="21" ry="30" transform="rotate(22 290 368)" fill="#0c9a44" stroke="#111"/>
<g stroke="#111" stroke-width="5"><path d="M296 340l-6 22M310 358l-14 8M304 392l-10-14M276 394l8-16M270 366l14 0"/></g>
<g stroke="#12c452" stroke-width="3"><path d="M296 340l-6 22M310 358l-14 8M304 392l-10-14M276 394l8-16M270 366l14 0"/></g>
<ellipse cx="290" cy="368" rx="11" ry="14" transform="rotate(22 290 368)" fill="#777" stroke="#222"/>
<circle cx="293" cy="376" r="3" fill="#f090a0"/><circle cx="290" cy="372" r="5" fill="none" stroke="#222"/>
<path d="M283 382l7 0" stroke="#14c"/>
<!-- dispenser -->
<path d="M258 402l12-1 10 6 -3 18-8 8-12-10z" fill="#7a1060" stroke="#111"/>
<path d="M244 412l14-4 4 6-14 6z" fill="#9a3a10" stroke="#111"/>
<rect x="259" y="425" width="6" height="28" fill="#999" stroke="#333"/>
<!-- top-left rail -->
<path d="M240 419l135 78v9L240 429z" fill="#111"/>
<path d="M242 426l132 76" stroke="#999" stroke-dasharray="1 2"/>
<path d="M242 423l132 76" stroke="#999" stroke-dasharray="1 3"/>
<path d="M250 452l32-22 18 6-36 26z" fill="#333" stroke="#111"/>
<ellipse cx="262" cy="451" rx="9" ry="5" fill="#d080e0" stroke="#111"/><rect x="258" y="440" width="9" height="13" fill="#999" stroke="#333"/>
<!-- olive panel -->
<path d="M245 433l124 68v126l-124-69z" fill="#585008" stroke="#111"/>
<rect x="239" y="420" width="6" height="142" fill="#0a0a0a"/><rect x="241" y="424" width="2" height="135" fill="#555"/>
<path d="M350 543l14 7v23l-14-8z" fill="#ccc" stroke="#000"/><path d="M350 547h6v8h-6zM352 560h7v6h-7z" fill="#222"/>
<path d="M240 558l130 71v12l-18-6L240 570z" fill="#111"/><path d="M244 563l122 68" stroke="#999" stroke-dasharray="1 2"/>
<rect x="369" y="497" width="16" height="144" fill="#060606"/><rect x="380" y="498" width="4" height="140" fill="#777"/>
<!-- right face panels -->
<path d="M386 503l37-18v107l-37 21z" fill="#2e0a90"/>
<path d="M423 485l32-17v42l-32 16z" fill="#0a7a30"/>
<path d="M423 592V520l62-26 52 33z" fill="#066a26"/>
<path d="M485 497l57-32 43-27v59l-43 30z" fill="#2e0a90" stroke="#111" stroke-width=".5"/>
<path d="M542 465v62" stroke="#111"/>
<path d="M542 417l43-26v42l-43 26z" fill="#2e0a90"/>
<rect x="455" y="443" width="17" height="54" fill="#0a0a0a"/><rect x="466" y="446" width="4" height="48" fill="#777"/>
<path d="M385 497l85-52v12l-85 50z" fill="#181818"/><path d="M387 502l82-48" stroke="#888" stroke-dasharray="1 2"/><path d="M387 505l82-47" stroke="#777"/>
<ellipse cx="398" cy="564" rx="8" ry="11" transform="rotate(15 398 564)" fill="#0a7a30" stroke="#111"/>
<ellipse cx="406" cy="599" rx="3" ry="4" fill="#6048f0" stroke="#111"/>
<ellipse cx="567" cy="466" rx="8" ry="11" transform="rotate(15 567 466)" fill="#5a5208" stroke="#111"/>
<ellipse cx="533" cy="515" rx="3" ry="4" transform="rotate(-20 533 515)" fill="#0a7a30" stroke="#111"/>
<ellipse cx="558" cy="510" rx="3" ry="4" fill="#6048f0" stroke="#111"/>
<path d="M385 536l204-109v13L385 552z" fill="#111"/>
<path d="M387 540l200-107" stroke="#999" stroke-dasharray="1 2"/><path d="M387 546l200-106" stroke="#777"/><path d="M387 549l200-106" stroke="#999" stroke-dasharray="1 3"/>
<path d="M385 614l205-115v9L385 628z" fill="#111"/><path d="M385 622l205-115v6L385 632z" fill="#1a1a1a"/>
<path d="M387 619l200-113" stroke="#999" stroke-dasharray="1 2"/><path d="M387 627l200-113" stroke="#777"/>
<rect x="241" y="558" width="9" height="8" fill="#111"/>
<rect x="244" y="568" width="3" height="7" fill="#109070"/><ellipse cx="245" cy="578" rx="6" ry="4" fill="#106a50" stroke="#111"/>
<rect x="356" y="631" width="12" height="10" fill="#181818"/><rect x="359" y="636" width="3" height="7" fill="#109070"/><ellipse cx="361" cy="644" rx="6" ry="4" fill="#106a50" stroke="#111"/>
<circle cx="385" cy="638" r="6" fill="#142060" stroke="#2a8a20" stroke-width="2"/>
<rect x="590" y="510" width="7" height="8" fill="#222"/><rect x="592" y="518" width="3" height="6" fill="#109070"/><ellipse cx="593" cy="527" rx="6" ry="4" fill="#106a50" stroke="#111"/>
<ellipse cx="569" cy="525" rx="5" ry="3" fill="#106a50" stroke="#111"/>
<ellipse cx="269" cy="575" rx="4" ry="3" fill="#333"/>
</g>

<!-- triad -->
<path d="M245 695v-16" stroke="#0a7020" stroke-width="3.500"/><path d="M245 672l3 8-3 2-3-2z" fill="#18a040" stroke="#0a5020"/>
<path d="M245 695l-11 8" stroke="#1414c0" stroke-width="3"/><path d="M223 709l10-7 3 4z" fill="#3a4ae0" stroke="#1414a0"/>
<path d="M245 695l11 7" stroke="#a01010" stroke-width="3"/><path d="M266 709l-11-4 3-5z" fill="#e04040" stroke="#a01010"/>
<text x="240" y="671" font-family="Liberation Mono,monospace" font-size="10" fill="#108030">Y</text>
<text x="217" y="714" font-family="Liberation Mono,monospace" font-size="10" fill="#1414e0">Z</text>
<text x="264" y="714" font-family="Liberation Mono,monospace" font-size="10" fill="#e01010">X</text>
<text x="217" y="749" class="t" font-weight="bold" fill="#111">*等轴测</text>

<!-- sash -->
<rect x="202" y="96" width="2" height="310" fill="#888"/>
<rect x="202" y="444" width="2" height="310" fill="#888"/>
<rect x="203" y="406" width="8" height="38" fill="#ddd" stroke="#888" stroke-width=".5"/>
<path d="M209 412l-3 3 3 3zM209 421l-3 3 3 3zM209 430l-3 3 3 3z" fill="#333"/>

<!-- bottom tabs -->
<rect x="4" y="754" width="605" height="17" fill="#e6e6e6"/>
<rect x="204" y="755" width="405" height="1" fill="#000"/>
<g fill="#a8a8a8" stroke="#999"><rect x="5.500" y="756" width="15" height="14"/><rect x="21.500" y="756" width="15" height="14"/><rect x="37.500" y="756" width="15" height="14"/><rect x="53.500" y="756" width="15" height="14"/></g>
<path d="M10 760v7M16 760l-5 3.500 5 3.500zM32 760l-5 3.500 5 3.500zM43 760l5 3.500-5 3.500zM58 760l5 3.500-5 3.500zM64.500 760v7" fill="#888" stroke="#888"/>
<rect x="72.500" y="754.500" width="44" height="15" fill="#e6e6e6" stroke="#333"/>
<rect x="117.500" y="755.500" width="76" height="13" fill="#a8a8a8" stroke="#444"/>
<text x="83" y="767" class="t">模型</text>
<text x="124" y="766" class="t" fill="#023">运动算例<tspan font-family="Liberation Mono,monospace" font-size="11"> 1</tspan></text>

<!-- status bar -->
<rect x="4" y="771" width="605" height="1" fill="#999"/>
<rect x="4" y="772" width="605" height="17" fill="#b4b4b4"/>
<rect x="4" y="789" width="605" height="1" fill="#ddd"/>
<text x="5" y="784" class="m">SolidWorks 2014</text>
<g fill="#c0c0c0" stroke="#eee"><rect x="167.500" y="772.500" width="55" height="16"/><rect x="225.500" y="772.500" width="90" height="16"/><rect x="319.500" y="772.500" width="85" height="16"/><rect x="408.500" y="772.500" width="5" height="16"/><rect x="415.500" y="772.500" width="5" height="16"/></g>
<text x="168" y="785" class="t">完全定义</text>
<text x="227" y="785" class="t">大型装配体模式</text>
<text x="321" y="785" class="t">在编辑 装配体</text>
<text x="450" y="785" class="t">自定义</text>
<path d="M503 782h6l-3-3z" fill="#444"/>
<rect x="525.500" y="774.500" width="12" height="13" fill="#f0f0f0" stroke="#446"/>
<text x="528" y="785" font-family="Liberation Sans,sans-serif" font-size="11" font-weight="bold" fill="#109020">?</text>
<path d="M590 786l-6-6 9-8 8-1 0 8-8 8z" fill="#ffc820" stroke="#a06000"/><path d="M588 781l6-5M591 784l6-5" stroke="#fff2a0"/>
</svg>
</body></html>
